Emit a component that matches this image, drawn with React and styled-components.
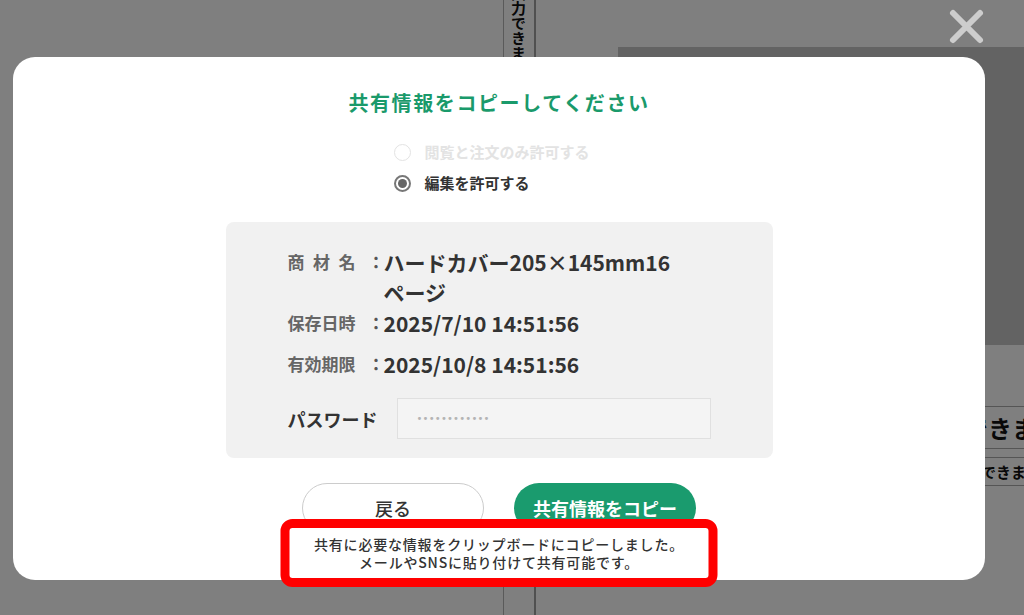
import React from 'react';
import styled, { createGlobalStyle } from 'styled-components';

const GlobalStyle = createGlobalStyle`
  * { box-sizing: border-box; }
  html, body {
    margin: 0;
    padding: 0;
    background: #fff;
    font-family: "Noto Sans CJK JP", "Noto Sans", sans-serif;
  }
`

// page that sits behind the dimmed overlay
const Page = styled.div`
  display: flex;
  height: 615px;
  overflow: hidden;
  background: #fff;
`

const LeftArea = styled.div`
  width: 503px;
  flex-shrink: 0;
`

const Strip = styled.div`
  width: 33px;
  flex-shrink: 0;
  border-left: 1px solid #b4b4b4;
  border-right: 2px solid #a0a0a0;
  writing-mode: vertical-rl;
  font-size: 15px;
  font-weight: 700;
  line-height: 31px;
  color: #111;
  margin-top: -14px;
`

const RightArea = styled.div`
  margin-left: 82px;
  flex: 1;
  display: flex;
  flex-direction: column;
  padding-top: 47px;
  overflow: hidden;
`

const DarkPanel = styled.div`
  height: 298px;
  background: #c6c6c6;
  margin-bottom: 61px;
`

const BgRow = styled.div`
  border-top: 1px solid #aaa;
  border-bottom: 1px solid #aaa;
  height: ${p => p.$h}px;
  line-height: ${p => p.$h - 2}px;
  margin-top: ${p => p.$mt || 0}px;
  padding-left: ${p => p.$pl}px;
  font-size: ${p => p.$size}px;
  font-weight: 700;
  color: #111;
  white-space: nowrap;
`

const Overlay = styled.div`
  position: fixed;
  inset: 0;
  background: rgba(0, 0, 0, 0.5);
  display: flex;
  flex-direction: column;
  align-items: flex-start;
`

const CloseButton = styled.button`
  align-self: flex-end;
  margin: 8px 39px 0 0;
  width: 37px;
  height: 37px;
  padding: 0;
  border: none;
  background: none;
  cursor: pointer;
  svg { display: block; }
`

const Modal = styled.div`
  position: relative;
  margin: 12px 0 0 13px;
  width: 972px;
  height: 523px;
  background: #fff;
  border-radius: 22px;
  padding-top: 32px;
  display: flex;
  flex-direction: column;
  align-items: center;
`

const Title = styled.h2`
  margin: 0;
  font-size: 20px;
  line-height: 28px;
  font-weight: 700;
  letter-spacing: 1.6px;
  color: #1a9a6b;
`

const RadioGroup = styled.div`
  margin: 23px 14px 0 0;
  display: flex;
  flex-direction: column;
  gap: 7px;
`

const RadioItem = styled.label`
  display: flex;
  align-items: center;
  gap: 13px;
  font-size: 15px;
  line-height: 24px;
  font-weight: 700;
  color: ${p => (p.$disabled ? '#e3e3e3' : '#333')};
`

const RadioMark = styled.span`
  width: 17px;
  height: 17px;
  border-radius: 50%;
  border: ${p => (p.$checked ? '2px solid #777' : '1.5px solid #e3e3e3')};
  display: flex;
  align-items: center;
  justify-content: center;

  &::after {
    content: '';
    width: 9px;
    height: 9px;
    border-radius: 50%;
    background: ${p => (p.$checked ? '#666' : 'transparent')};
  }
`

const InfoBox = styled.div`
  margin-top: 27px;
  width: 547px;
  background: #f1f1f1;
  border-radius: 8px;
  padding: 25px 62px 19px;
`

const InfoRow = styled.div`
  display: flex;
  align-items: flex-start;
  margin-top: ${p => p.$mt || 0}px;
`

const Label = styled.span`
  width: 80px;
  flex-shrink: 0;
  font-size: 17px;
  line-height: 30px;
  font-weight: 700;
  color: #666;
  white-space: pre;
`

const Colon = styled.span`
  width: 16px;
  flex-shrink: 0;
  font-size: 17px;
  line-height: 30px;
  font-weight: 700;
  color: #555;
`

const Value = styled.span`
  max-width: 306px;
  font-size: 21px;
  line-height: 30px;
  font-weight: 700;
  color: #333;
`

const PasswordRow = styled.div`
  display: flex;
  align-items: center;
  margin-top: 19px;
`

const PasswordLabel = styled.span`
  width: 109px;
  flex-shrink: 0;
  font-size: 18px;
  font-weight: 700;
  color: #333;
`

const PasswordInput = styled.input`
  width: 315px;
  height: 41px;
  background: #f4f4f4;
  border: 1px solid #e0e0e0;
  padding: 0 0 0 19px;
  outline: none;
  font-family: "DejaVu Sans", sans-serif;
  font-size: 10px;
  letter-spacing: 0.2px;

  &::placeholder {
    color: #b4b4b4;
  }
`

const ButtonRow = styled.div`
  margin-top: 25px;
  display: flex;
  gap: 30px;
`

const Button = styled.button`
  width: 182px;
  height: 50px;
  border-radius: 25px;
  font-family: inherit;
  font-size: 18px;
  font-weight: ${p => (p.$primary ? 700 : 500)};
  color: ${p => (p.$primary ? '#fff' : '#333')};
  background: ${p => (p.$primary ? '#1a9b6e' : '#fff')};
  border: ${p => (p.$primary ? 'none' : '1.5px solid #ccc')};
  cursor: pointer;
`

const Toast = styled.div`
  position: absolute;
  top: 462px;
  left: 50%;
  transform: translateX(-50%);
  width: 437px;
  border: 9px solid #ff0000;
  border-radius: 12px;
  background: #fff;
  padding: 7px 0;
  text-align: center;
  font-size: 14px;
  line-height: 18px;
  font-weight: 500;
  letter-spacing: 0.8px;
  color: #333;
`

const rows = [
  { label: '商\u2002材\u2002名', value: 'ハードカバー205×145mm16ページ', mt: 0 },
  { label: '保存日時', value: '2025/7/10 14:51:56', mt: 1 },
  { label: '有効期限', value: '2025/10/8 14:51:56', mt: 11 },
]

export default function App() {
  return (
    <>
      <GlobalStyle />
      <Page>
        <LeftArea />
        <Strip>入力できます</Strip>
        <RightArea>
          <DarkPanel />
          <BgRow $h={43} $pl={298} $size={24}>入力できます</BgRow>
          <BgRow $h={29} $mt={8} $pl={333} $size={15}>入力できます</BgRow>
        </RightArea>
      </Page>

      <Overlay>
        <CloseButton aria-label="閉じる">
          <svg width="37" height="37" viewBox="0 0 37 37">
            <path d="M5 5 L32 32 M32 5 L5 32" stroke="#cdcdcd" strokeWidth="6" strokeLinecap="round" fill="none" />
          </svg>
        </CloseButton>

        <Modal>
          <Title>共有情報をコピーしてください</Title>

          <RadioGroup>
            <RadioItem $disabled>
              <RadioMark />
              閲覧と注文のみ許可する
            </RadioItem>
            <RadioItem>
              <RadioMark $checked />
              編集を許可する
            </RadioItem>
          </RadioGroup>

          <InfoBox>
            {rows.map(r => (
              <InfoRow key={r.label} $mt={r.mt}>
                <Label>{r.label}</Label>
                <Colon>：</Colon>
                <Value>{r.value}</Value>
              </InfoRow>
            ))}
            <PasswordRow>
              <PasswordLabel>パスワード</PasswordLabel>
              <PasswordInput readOnly placeholder="••••••••••••" />
            </PasswordRow>
          </InfoBox>

          <ButtonRow>
            <Button>戻る</Button>
            <Button $primary>共有情報をコピー</Button>
          </ButtonRow>

          <Toast>
            共有に必要な情報をクリップボードにコピーしました。
            <br />
            メールやSNSに貼り付けて共有可能です。
          </Toast>
        </Modal>
      </Overlay>
    </>
  );
}
